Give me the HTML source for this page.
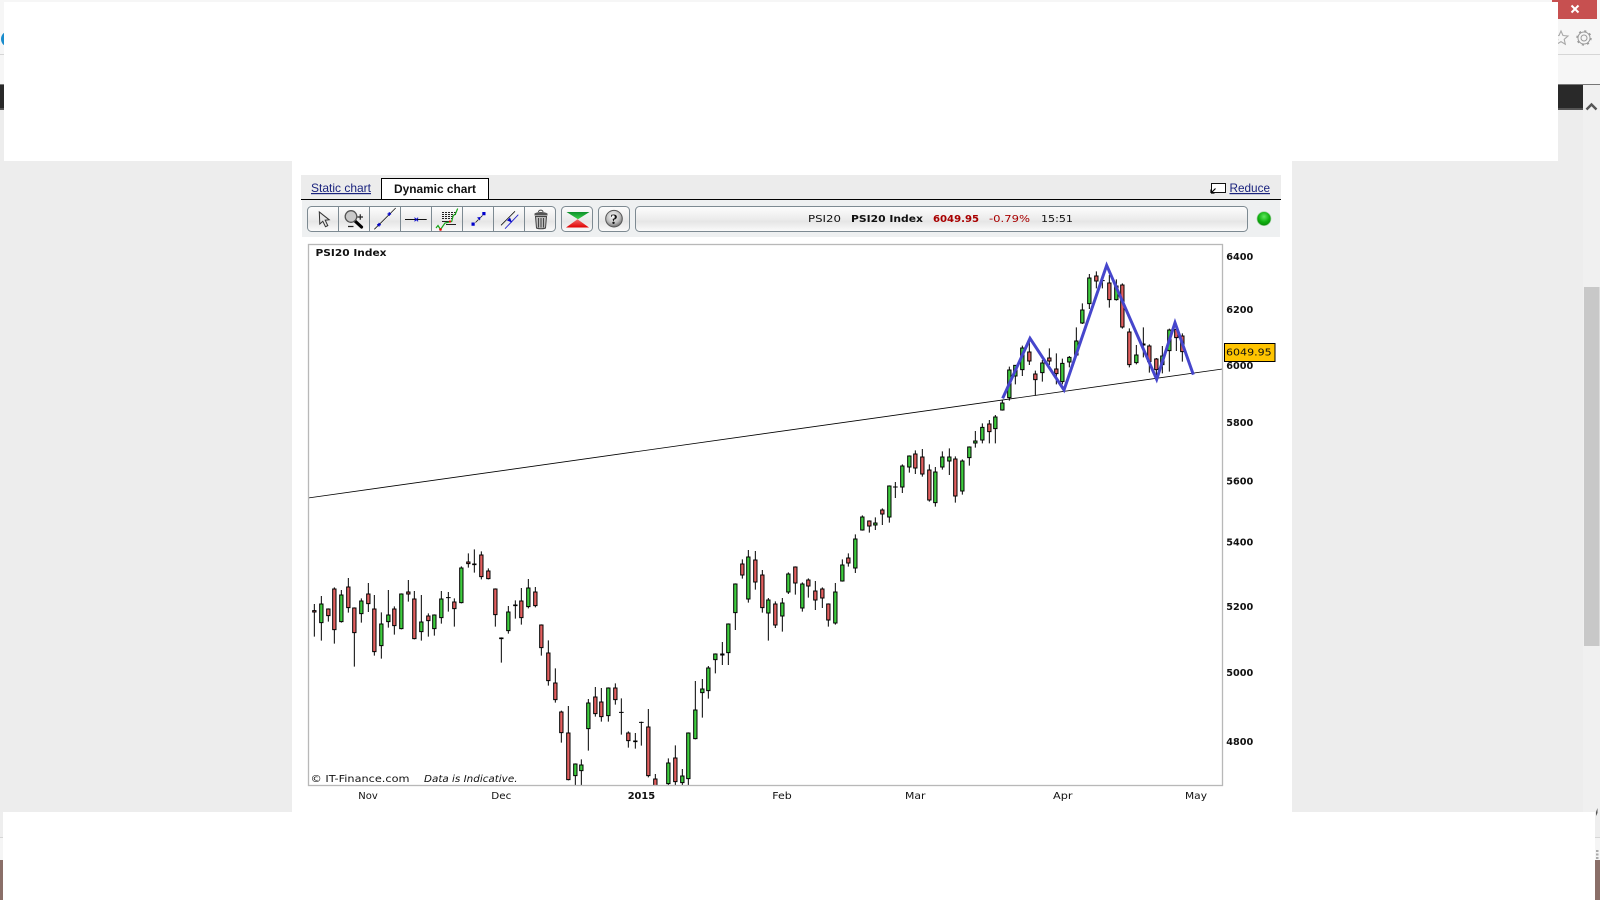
<!DOCTYPE html>
<html lang="en"><head><meta charset="utf-8"><title>PSI20 Index</title>
<style>html,body{margin:0;padding:0;background:#ededed;overflow:hidden}svg{display:block}
.v{font-family:"DejaVu Sans",sans-serif;font-size:10px;fill:#111}
.b{font-weight:bold}
.a{font-family:"Liberation Sans",sans-serif;font-size:12px}
</style></head><body>
<svg xmlns="http://www.w3.org/2000/svg" width="1600" height="900" viewBox="0 0 1600 900">
<defs>
<linearGradient id="g" x1="0" y1="0" x2="0" y2="1"><stop offset="0" stop-color="#fdfdfd"/><stop offset=".5" stop-color="#ececec"/><stop offset=".6" stop-color="#e6e6e6"/><stop offset="1" stop-color="#fbfbfb"/></linearGradient>
<radialGradient id="led" cx=".5" cy=".35" r=".65"><stop offset="0" stop-color="#5fe85f"/><stop offset=".6" stop-color="#10b010"/><stop offset="1" stop-color="#0a8a0a"/></radialGradient>
<radialGradient id="hlp" cx=".45" cy=".35" r=".7"><stop offset="0" stop-color="#fafafa"/><stop offset=".6" stop-color="#bdbdbd"/><stop offset="1" stop-color="#5e5e5e"/></radialGradient>
<linearGradient id="gt" x1="0" y1="0" x2="0" y2="1"><stop offset="0" stop-color="#0c8f2a"/><stop offset="1" stop-color="#3bd24a"/></linearGradient>
<linearGradient id="rt" x1="0" y1="0" x2="0" y2="1"><stop offset="0" stop-color="#f26a6a"/><stop offset="1" stop-color="#e00000"/></linearGradient>
<clipPath id="cf"><rect x="308" y="244" width="914.5" height="541.5"/></clipPath>
</defs>

<!-- browser chrome background -->
<rect width="1600" height="84" fill="#f6f6f6"/>
<rect y="54" width="1600" height="1" fill="#d6d6d6"/>
<rect y="84" width="1600" height="1" fill="#777"/>
<rect y="85" width="1583" height="23" fill="#292929"/>
<rect y="108" width="1583" height="2" fill="#555"/>
<rect y="110" width="1600" height="702" fill="#ededed"/>
<rect x="1583" y="85" width="17" height="727" fill="#f0f0f0"/>
<path d="M1586.5 109.5l5-5 5 5" fill="none" stroke="#555" stroke-width="2.4"/>
<rect x="1584" y="287" width="15.5" height="359" fill="#c8c8c8"/>
<rect x="1552" y="0" width="45" height="19" fill="#c75050"/>
<path d="M1571.5 5.5l7 7m0-7l-7 7" stroke="#fff" stroke-width="2"/>
<path d="M1561 31l2 4.5 5 .5-3.800 3.300 1.100 4.900-4.300-2.600-4.300 2.600 1.100-4.900L1554 36l5-.5z" fill="none" stroke="#a8a8a8" stroke-width="1.100"/>
<circle cx="1584" cy="38" r="3" fill="none" stroke="#9a9a9a"/>
<circle cx="1584" cy="38" r="6" fill="none" stroke="#9a9a9a" stroke-width="1"/>
<circle cx="1584" cy="38" r="7" fill="none" stroke="#9a9a9a" stroke-width="1.400" stroke-dasharray="2.200 3.300"/>
<circle cx="9" cy="39" r="8" fill="#1a8ccc"/>

<!-- white blocks -->
<rect x="4" y="2" width="1554" height="159" fill="#fff"/>
<rect x="292" y="161" width="1000" height="651" fill="#fff"/>

<!-- bottom -->
<rect y="812" width="1600" height="88" fill="#f5f5f5"/>
<rect y="812" width="1600" height="25" fill="#eeeeee"/>
<rect y="837" width="1600" height="1" fill="#d6d6d6"/>
<rect y="860" width="1600" height="40" fill="#8a6f68"/>
<path d="M1596 850h2.500v2h-2.500zM1596 853.500h2.500v2h-2.500zM1596 857h2.500v2h-2.500z" fill="#aaa"/>
<rect x="3" y="812" width="1592" height="88" fill="#fff"/>
<path d="M1596 812l1.500-4v5l-1.500 3z" fill="#555"/>

<!-- tab header -->
<rect x="301" y="175" width="980" height="24" fill="#ececec"/>
<rect x="302" y="200" width="978" height="37" fill="#eef0f1"/>
<rect x="381.500" y="178.500" width="107" height="21" fill="#fff" stroke="#000"/>
<rect x="301" y="199" width="980" height="1" fill="#000"/>
<text x="311" y="192" class="a" fill="#1a237e" text-decoration="underline" textLength="60" lengthAdjust="spacingAndGlyphs">Static chart</text>
<text x="394" y="193" class="a b" fill="#111" textLength="82" lengthAdjust="spacingAndGlyphs">Dynamic chart</text>
<rect x="1211.500" y="183.500" width="14" height="9" fill="#fff" stroke="#111"/>
<path d="M1211 193l4.500-4.500M1211 193v-3.500M1211 193h3.500" stroke="#000" stroke-width="1.200" fill="none"/>
<text x="1229.500" y="192" class="a" fill="#1a237e" text-decoration="underline" textLength="40.500" lengthAdjust="spacingAndGlyphs">Reduce</text>

<!-- toolbar -->
<rect x="307.500" y="206.500" width="248" height="25" rx="4" fill="url(#g)" stroke="#7d8a92"/>
<path d="M338.500 206.500v25M369.500 206.500v25M400.500 206.500v25M431.500 206.500v25M462.500 206.500v25M493.500 206.500v25M524.500 206.500v25" stroke="#7d8a92"/>
<rect x="561.500" y="206.500" width="31" height="25" rx="4" fill="url(#g)" stroke="#7d8a92"/>
<rect x="598.500" y="206.500" width="31" height="25" rx="4" fill="url(#g)" stroke="#7d8a92"/>
<rect x="635.500" y="206.500" width="612" height="25" rx="4" fill="url(#g)" stroke="#7d8a92"/>
<!-- arrow -->
<path d="M319.300 212l.5 12 3-2.700 2.700 5.400 2.300-1.100-2.600-5.400 4-.4z" fill="#e6e6e6" stroke="#333"/>
<!-- magnifier -->
<path d="M355 221l6.500 6" stroke="#000" stroke-width="3.200" stroke-linecap="round"/>
<circle cx="351" cy="216.500" r="5.800" fill="#c9c9c9" stroke="#555" stroke-width="1.300"/>
<path d="M357.500 217h5.500M360.250 214.300v5.500M348 226.500h5.500" stroke="#222" stroke-width="1.200"/>
<!-- line -->
<path d="M374.300 229.300L395.700 208" stroke="#111" stroke-width=".8" fill="none"/>
<path d="M377.200 224.700h3.600M379 222.900v3.600M387.500 214h3.600M389.300 212.200v3.600" stroke="#00c" stroke-width="1.300"/>
<!-- horizontal -->
<path d="M405 219.500h21.700" stroke="#111" stroke-width=".9"/>
<path d="M414.500 217.700l3.600 3.600m0-3.600l-3.600 3.600" stroke="#00c" stroke-width="1"/>
<!-- fib chart -->
<path d="M442 212.500h14M442 214.500h14M442 216.500h12M442 218.500h12" stroke="#222" stroke-width=".9" stroke-dasharray="2 1"/>
<path d="M442 221.500h8M446 224.500h10" stroke="#222" stroke-width=".9"/>
<path d="M436 228l2-2.500 2.500 4 4.500-6.500 6.700-1.500 1.500-6 2-1 2.500-6" stroke="#16a516" stroke-width="1.200" fill="none"/>
<circle cx="440.500" cy="229.500" r="1.300" fill="#e00"/><circle cx="450" cy="221.500" r="1.100" fill="#e00"/>
<!-- zoom line -->
<path d="M475.500 222.500l3-3M480.500 217.500l2-2" stroke="#111" stroke-width=".8"/>
<path d="M471.500 222.500h3.200v3.200h-3.200zM482.300 212h3.200v3.200h-3.200z" fill="#00c"/>
<path d="M477 217.500l3.500-.5-.5 3.500z" fill="#00c"/>
<!-- parallel -->
<path d="M501 225.300l14-14" stroke="#111" stroke-width=".8" fill="none"/>
<path d="M505 228.700l13.300-14" stroke="#22c" stroke-width=".9" fill="none"/>
<path d="M507 220.500l3-3 2 5z" fill="#00c"/>
<!-- trash -->
<path d="M538.500 212c0-2.500 4.500-2.500 4.500 0" fill="none" stroke="#444"/>
<path d="M534.500 213.500c3-2 10-2 13 0v2h-13z" fill="#555"/>
<path d="M535.500 216.500h11l-1 11.500c-2 1-7 1-9 0z" fill="#bbb" stroke="#444"/>
<path d="M538.500 218v9.500M541 218v9.500M543.500 218v9.500" stroke="#444"/>
<!-- pivot -->
<path d="M566.500 212h23l-11.500 7.300z" fill="url(#gt)"/>
<path d="M566 227.500h23l-11.500-8.200z" fill="url(#rt)"/>
<!-- help -->
<circle cx="614" cy="218.700" r="8.300" fill="url(#hlp)" stroke="#555"/>
<text x="614" y="224" text-anchor="middle" font-family="'Liberation Serif',serif" font-size="15" font-weight="bold" fill="#111">?</text>
<!-- status -->
<text x="808" y="222" class="v" textLength="33" lengthAdjust="spacingAndGlyphs">PSI20</text>
<text x="851" y="222" class="v b" textLength="72" lengthAdjust="spacingAndGlyphs">PSI20 Index</text>
<text x="933" y="222" class="v b" style="fill:#a80000" textLength="46" lengthAdjust="spacingAndGlyphs">6049.95</text>
<text x="989" y="222" class="v" style="fill:#a80000" textLength="41" lengthAdjust="spacingAndGlyphs">-0.79%</text>
<text x="1041" y="222" class="v" textLength="32" lengthAdjust="spacingAndGlyphs">15:51</text>
<circle cx="1264" cy="218.700" r="7" fill="url(#led)" stroke="#9fcfa0" stroke-width=".7"/>

<!-- chart -->
<rect x="308.500" y="244.500" width="914" height="541" fill="#fff"/>
<g clip-path="url(#cf)">
<g transform="translate(300 540) scale(.33333)">
<path fill="none" stroke="#000" stroke-width="3" d="M43 192V290M64 168V302M85 205V245M103 142V311M124 150V248M145 114V218M163 202V380M184 175V248M205 129V216M223 165V347M244 217V356M265 150V263M283 199V284M304 160V268M325 120V185M343 153V298M364 165V302M385 220V290M403 223V287M424 153V251M445 156V215M463 175V260M484 79V190M505 40V83M523 28V98M544 34V118M565 85V118M586 145V260M604 292V368M625 198V281M646 181V236M664 144V254M685 117V205M706 141V202M724 253V347M745 301V437M766 385V488M784 512V608M805 498V721M826 670V745M844 658V745M865 477V632M886 441V530M904 444V545M925 442V545M946 430V494M964 475V584M985 574V623M1006 579V626M1024 545V617M1045 507V712M1066 702V745M1084 735V745M1105 655V745M1126 616V745M1147 687V745M1165 577V745M1186 423V598M438 173h14M957 517h14M1017 547h14"/>
<path fill="#e25f5f" stroke="#000" stroke-width="3" d="M38 212h10V216h-10zM80 207h10V227h-10zM98 147h10V269h-10zM140 141h10V203h-10zM158 204h10V278h-10zM200 162h10V191h-10zM218 207h10V335h-10zM278 207h10V257h-10zM320 156h10V162h-10zM338 177h10V296h-10zM380 228h10V242h-10zM458 186h10V206h-10zM500 66h10V71h-10zM539 45h10V110h-10zM560 93h10V116h-10zM581 147h10V224h-10zM659 183h10V233h-10zM701 156h10V197h-10zM719 255h10V323h-10zM740 339h10V422h-10zM761 429h10V479h-10zM779 516h10V578h-10zM800 579h10V719h-10zM881 471h10V521h-10zM899 486h10V530h-10zM941 444h10V479h-10zM980 579h10V602h-10zM1001 603h10V605h-10zM1040 561h10V707h-10zM1061 717h10V750h-10zM1121 654h10V725h-10z"/>
<path fill="#3ecc3e" stroke="#000" stroke-width="3" d="M59 192h10V248h-10zM119 165h10V245h-10zM179 183h10V221h-10zM239 252h10V317h-10zM260 225h10V245h-10zM299 162h10V266h-10zM359 246h10V275h-10zM398 225h10V266h-10zM419 177h10V233h-10zM479 84h10V188h-10zM518 72h10V74h-10zM599 294h10V296h-10zM620 216h10V272h-10zM641 195h10V197h-10zM680 144h10V200h-10zM821 672h10V707h-10zM839 675h10V692h-10zM860 489h10V566h-10zM920 444h10V527h-10zM1100 669h10V731h-10zM1142 708h10V728h-10zM1160 579h10V716h-10zM1181 510h10V596h-10z"/>
</g>
<g transform="translate(690 640) scale(.33333)">
<path fill="none" stroke="#000" stroke-width="3" d="M37 117V233M55 78V176M76 40V100"/>
<path fill="#3ecc3e" stroke="#000" stroke-width="3" d="M32 147h10V158h-10zM50 84h10V152h-10zM71 42h10V59h-10z"/>
</g>
<g transform="translate(680 420) scale(.33333)">
<path fill="none" stroke="#000" stroke-width="3" d="M127 666V735M145 610V735M166 490V630M187 418V476M205 390V548M226 393V509M247 450V578M265 534V662M286 544V624M307 534V635M325 457V522M346 439V524M367 487V575M385 475V533M406 483V570M427 502V564M445 550V620M466 489V614M487 418V485M505 400V440M526 343V459M547 286V332M568 301V338M586 292V330M607 265V315M628 196V308M646 186V234M667 133V219M688 106V158M706 91V162M727 87V170M748 133V245M766 141V260M787 94V149M808 85V165M826 109V248M847 118V224M868 79V137M886 33V83M639 201h14"/>
<path fill="#e25f5f" stroke="#000" stroke-width="3" d="M122 702h10V705h-10zM182 432h10V465h-10zM221 420h10V486h-10zM242 465h10V563h-10zM281 552h10V615h-10zM341 441h10V489h-10zM380 480h10V498h-10zM401 513h10V540h-10zM422 507h10V534h-10zM440 552h10V600h-10zM500 414h10V429h-10zM563 303h10V318h-10zM602 270h10V282h-10zM701 102h10V144h-10zM722 111h10V162h-10zM743 150h10V240h-10zM821 117h10V228h-10z"/>
<path fill="#3ecc3e" stroke="#000" stroke-width="3" d="M140 612h10V698h-10zM161 492h10V578h-10zM200 411h10V537h-10zM260 540h10V579h-10zM302 549h10V588h-10zM320 462h10V516h-10zM362 492h10V564h-10zM461 516h10V609h-10zM482 435h10V483h-10zM521 357h10V444h-10zM542 291h10V330h-10zM581 309h10V315h-10zM623 198h10V291h-10zM662 138h10V201h-10zM683 108h10V141h-10zM761 156h10V248h-10zM782 111h10V141h-10zM803 111h10V123h-10zM842 123h10V213h-10zM863 81h10V113h-10zM881 63h10V69h-10z"/>
</g>
<g transform="translate(980 250) scale(.33333)">
<path fill="none" stroke="#000" stroke-width="3" d="M7 520V580M28 510V580M46 495V580M67 450V482M88 350V452M106 345V403M127 287V378M148 275V345M166 362V437M187 330V395M208 295V345M229 310V403M247 326V403M268 318V352M289 232V317M307 160V222M328 72V177M349 64V115M367 85V115M388 75V173M409 88V152M427 100V236M448 235V352M469 285V343M490 232V322M508 283V368M529 324V385M547 288V370M568 236V365M589 232V303M607 250V335M360 92h14"/>
<path fill="#e25f5f" stroke="#000" stroke-width="3" d="M23 522h10V545h-10zM143 306h10V333h-10zM161 372h10V389h-10zM203 324h10V333h-10zM224 357h10V371h-10zM344 78h10V93h-10zM383 99h10V149h-10zM422 105h10V231h-10zM443 246h10V344h-10zM485 282h10V285h-10zM503 288h10V335h-10zM524 327h10V359h-10zM584 238h10V263h-10zM602 258h10V305h-10z"/>
<path fill="#3ecc3e" stroke="#000" stroke-width="3" d="M2 532h10V570h-10zM41 501h10V536h-10zM62 459h10V480h-10zM83 360h10V443h-10zM101 346h10V378h-10zM122 294h10V359h-10zM182 339h10V368h-10zM242 340h10V395h-10zM263 322h10V336h-10zM284 273h10V315h-10zM302 180h10V219h-10zM323 84h10V161h-10zM404 108h10V149h-10zM464 315h10V338h-10zM542 318h10V344h-10zM563 240h10V302h-10z"/>
</g>
<path d="M308 498L1222.500 369" stroke="#000" stroke-width=".85" fill="none"/>
<path transform="translate(980 250) scale(.33333)" d="M68 445L150 265L252 420L380 46L530 388L585 218L640 374" fill="none" stroke="#4646cc" stroke-width="9" stroke-linejoin="miter"/>
</g>
<rect x="308.500" y="244.500" width="914" height="541" fill="none" stroke="#b8b8b8" stroke-width="1.300"/>
<text x="315.500" y="256" class="v b" textLength="71" lengthAdjust="spacingAndGlyphs">PSI20 Index</text>
<text x="310.500" y="782" class="v" textLength="99" lengthAdjust="spacingAndGlyphs">© IT-Finance.com</text>
<text x="424" y="782" class="v" font-style="italic" textLength="93.500" lengthAdjust="spacingAndGlyphs">Data is Indicative.</text>

<!-- y axis -->
<text x="1226.300" y="260" class="v b" textLength="27" lengthAdjust="spacingAndGlyphs">6400</text>
<text x="1226.300" y="313" class="v b" textLength="27" lengthAdjust="spacingAndGlyphs">6200</text>
<text x="1226.300" y="369" class="v b" textLength="27" lengthAdjust="spacingAndGlyphs">6000</text>
<text x="1226.300" y="426" class="v b" textLength="27" lengthAdjust="spacingAndGlyphs">5800</text>
<text x="1226.300" y="484.500" class="v b" textLength="27" lengthAdjust="spacingAndGlyphs">5600</text>
<text x="1226.300" y="545.500" class="v b" textLength="27" lengthAdjust="spacingAndGlyphs">5400</text>
<text x="1226.300" y="610" class="v b" textLength="27" lengthAdjust="spacingAndGlyphs">5200</text>
<text x="1226.300" y="676" class="v b" textLength="27" lengthAdjust="spacingAndGlyphs">5000</text>
<text x="1226.300" y="745" class="v b" textLength="27" lengthAdjust="spacingAndGlyphs">4800</text>
<rect x="1224.500" y="343.500" width="50.500" height="18" fill="#ffc400" stroke="#000"/>
<text x="1226" y="355.500" class="v" textLength="45.700" lengthAdjust="spacingAndGlyphs">6049.95</text>

<!-- x axis -->
<text x="358.300" y="799" class="v" textLength="19.500" lengthAdjust="spacingAndGlyphs">Nov</text>
<text x="491.300" y="799" class="v" textLength="20" lengthAdjust="spacingAndGlyphs">Dec</text>
<text x="627.700" y="799" class="v b" textLength="27.500" lengthAdjust="spacingAndGlyphs">2015</text>
<text x="772.300" y="799" class="v" textLength="19.500" lengthAdjust="spacingAndGlyphs">Feb</text>
<text x="905" y="799" class="v" textLength="20.500" lengthAdjust="spacingAndGlyphs">Mar</text>
<text x="1053" y="799" class="v" textLength="19.500" lengthAdjust="spacingAndGlyphs">Apr</text>
<text x="1185" y="799" class="v" textLength="22" lengthAdjust="spacingAndGlyphs">May</text>
</svg>
</body></html>
